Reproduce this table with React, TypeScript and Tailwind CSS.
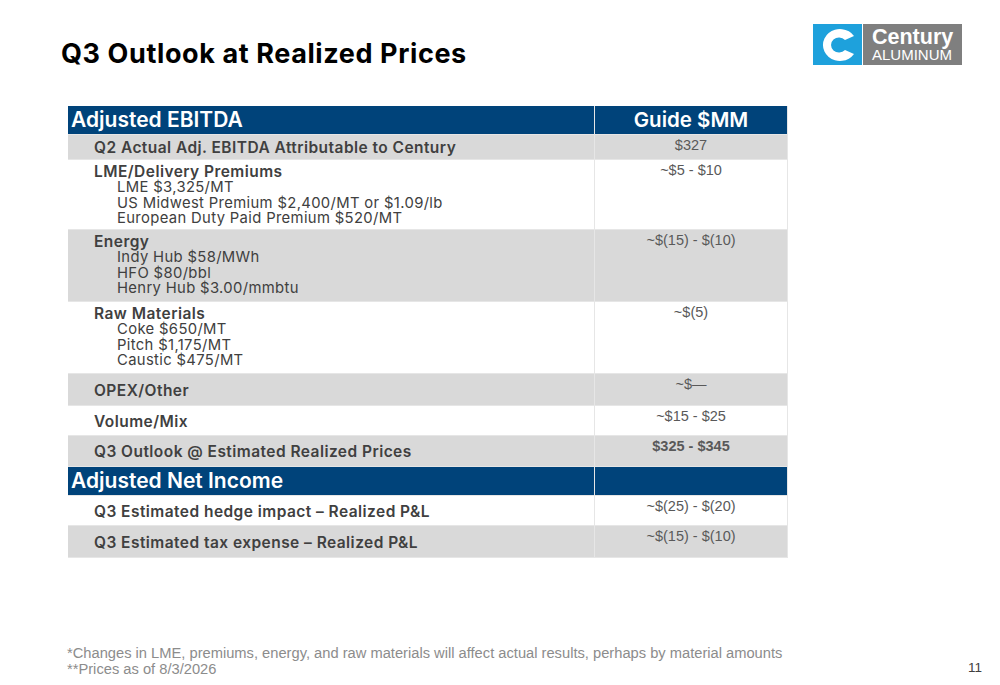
import React from "react";

type Row = {
  label: string;
  sub?: string[];
  value: string;
  shade: boolean;
  h: string;
  strong?: boolean;
};

const ebitdaRows: Row[] = [
  { label: "Q2 Actual Adj. EBITDA Attributable to Century", value: "$327", shade: true, h: "h-[24px]" },
  {
    label: "LME/Delivery Premiums",
    sub: ["LME $3,325/MT", "US Midwest Premium $2,400/MT or $1.09/lb", "European Duty Paid Premium $520/MT"],
    value: "~$5 - $10",
    shade: false,
    h: "h-[69px]",
  },
  {
    label: "Energy",
    sub: ["Indy Hub $58/MWh", "HFO $80/bbl", "Henry Hub $3.00/mmbtu"],
    value: "~$(15) - $(10)",
    shade: true,
    h: "h-[71px]",
  },
  {
    label: "Raw Materials",
    sub: ["Coke $650/MT", "Pitch $1,175/MT", "Caustic $475/MT"],
    value: "~$(5)",
    shade: false,
    h: "h-[71px]",
  },
  { label: "OPEX/Other", value: "~$—", shade: true, h: "h-[31px]" },
  { label: "Volume/Mix", value: "~$15 - $25", shade: false, h: "h-[29px]" },
  { label: "Q3 Outlook @ Estimated Realized Prices", value: "$325 - $345", shade: true, h: "h-[30px]", strong: true },
];

const netRows: Row[] = [
  { label: "Q3 Estimated hedge impact – Realized P&L", value: "~$(25) - $(20)", shade: false, h: "h-[29px]" },
  { label: "Q3 Estimated tax expense – Realized P&L", value: "~$(15) - $(10)", shade: true, h: "h-[31px]" },
];

function HeaderRow({ title, right }: { title: string; right?: string }) {
  return (
    <div className="flex h-[28px] gap-[1px]">
      <div className="flex w-[526px] items-center bg-[#00437a] pl-[3px] text-[21px] font-semibold text-white">
        {title}
      </div>
      <div className="flex flex-1 items-center justify-center bg-[#00437a] text-[20.5px] font-semibold text-white">
        {right}
      </div>
    </div>
  );
}

function DataRow({ row }: { row: Row }) {
  const bg = row.shade ? "bg-[#d9d9d9]" : "bg-white";
  return (
    <div className={`flex gap-[1px] ${row.h}`}>
      <div className={`flex w-[526px] flex-col pl-[26px] ${row.sub ? "justify-start pt-[3px]" : "justify-center pt-[1px]"} ${bg}`}>
        <div className="text-[15.5px] font-semibold leading-[17px] tracking-[0.45px] text-[#404040]">{row.label}</div>
        {row.sub?.map((s) => (
          <div key={s} className="pl-[23px] text-[14.8px] leading-[15.5px] tracking-[0.35px] text-[#404040]">
            {s}
          </div>
        ))}
      </div>
      <div
        className={`flex-1 pt-[1px] text-center font-['Liberation_Sans',Arial,sans-serif] text-[14.5px] leading-[18px] text-[#595959] ${bg} ${
          row.strong ? "font-bold" : ""
        }`}
      >
        {row.value}
      </div>
    </div>
  );
}

function Logo() {
  return (
    <div className="flex h-[41px] gap-[1px]">
      <div className="flex w-[49px] items-center justify-center bg-[#1ea1dc]">
        <svg width="40" height="38" viewBox="0 0 40 38">
          <path
            d="M36 10 A17 16 0 1 0 36 28 L27 24 A8 7.5 0 1 1 27 14 Z"
            fill="white"
          />
        </svg>
      </div>
      <div className="flex w-[99px] flex-col justify-center bg-[#7f7f7f] pl-[9px] text-white">
        <div className="font-['Liberation_Sans',Arial,sans-serif] text-[21.5px] font-bold leading-[20px]">Century</div>
        <div className="font-['Liberation_Sans',Arial,sans-serif] text-[15px] leading-[15px]">ALUMINUM</div>
      </div>
    </div>
  );
}

export default function App() {
  return (
    <div className="relative h-[685px] w-[1000px] overflow-hidden bg-white font-['Inter','Noto_Sans',sans-serif]">
      <div className="flex items-start justify-between pl-[61px] pr-[38px] pt-[24px]">
        <h1 className="pt-[18px] text-[27px] font-bold leading-[23px] tracking-[0.6px] text-black">
          Q3 Outlook at Realized Prices
        </h1>
        <Logo />
      </div>

      <div className="ml-[68px] mt-[41px] flex w-[720px] flex-col gap-[1px] bg-[#e6e6e6] pb-[1px] pr-[1px]">
        <HeaderRow title="Adjusted EBITDA" right="Guide $MM" />
        {ebitdaRows.map((r) => (
          <DataRow key={r.label} row={r} />
        ))}
        <HeaderRow title="Adjusted Net Income" />
        {netRows.map((r) => (
          <DataRow key={r.label} row={r} />
        ))}
      </div>

      <div className="absolute bottom-[8px] left-[67px] font-['Liberation_Sans',Arial,sans-serif] text-[14.7px] leading-[16px] text-[#8c8c8c]">
        <div>*Changes in LME, premiums, energy, and raw materials will affect actual results, perhaps by material amounts</div>
        <div>**Prices as of 8/3/2026</div>
      </div>
      <div className="absolute bottom-[7px] right-[18px] font-['Liberation_Sans',Arial,sans-serif] text-[13.5px] text-[#404040]">
        11
      </div>
    </div>
  );
}
